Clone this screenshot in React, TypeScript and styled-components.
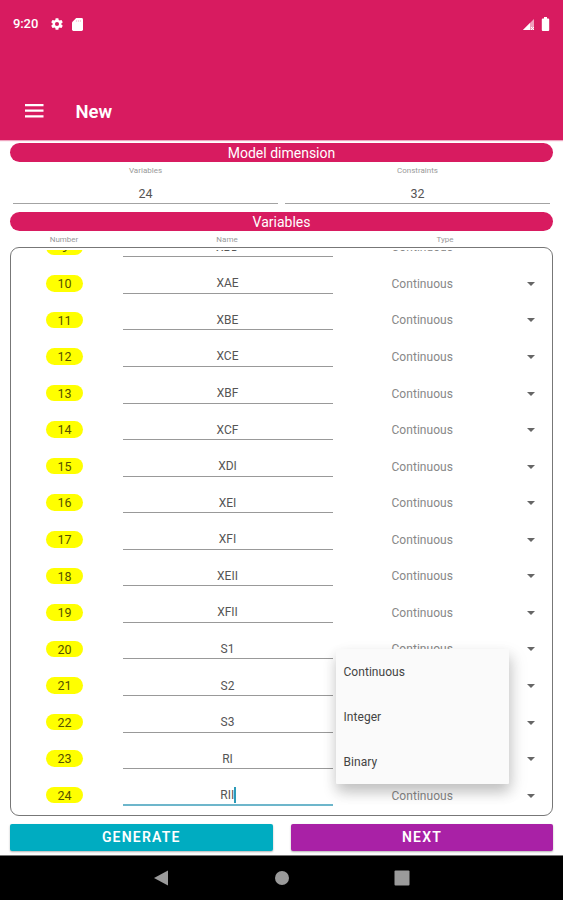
import React from 'react';
import styled, { createGlobalStyle } from 'styled-components';

const GlobalStyle = createGlobalStyle`
  * { box-sizing: border-box; }
  html, body { margin: 0; background: #fff; }
  body { font-family: Roboto, "Liberation Sans", sans-serif; color: #555; }
`;

const Screen = styled.div`
  position: relative;
  width: 563px;
  height: 900px;
  display: flex;
  flex-direction: column;
  overflow: hidden;
  background: #fff;
`;

const Header = styled.header`
  height: 140px;
  flex: none;
  background: #d81b60;
  color: #fff;
  box-shadow: 0 1px 1px rgba(216, 27, 96, 0.4);
`;

const StatusBar = styled.div`
  height: 48px;
  padding: 0 13px 0 13px;
  display: flex;
  align-items: center;
  justify-content: space-between;
`;

const StatusGroup = styled.div<{ $gap: number }>`
  display: flex;
  align-items: center;
  gap: ${(p) => p.$gap}px;
`;

const Clock = styled.span`
  font-size: 13px;
  line-height: 15px;
  margin-top: -1px;
  font-weight: 500;
  width: 28px;
  letter-spacing: -0.1px;
  white-space: nowrap;
`;

const Toolbar = styled.div`
  height: 64px;
  margin-top: 31px;
  padding-left: 25px;
  display: flex;
  align-items: center;
  gap: 31.5px;
`;

const Title = styled.h1`
  margin: 2px 0 0;
  font-size: 18.5px;
  line-height: 24px;
  font-weight: 600;
`;

const Main = styled.main`
  flex: 1;
  padding: 3px 10px 0;
  display: flex;
  flex-direction: column;
`;

const SectionBar = styled.h2`
  margin: 0;
  height: 19px;
  flex: none;
  border-radius: 10px;
  background: #d81b60;
  color: #fff;
  text-align: center;
  font-size: 14px;
  font-weight: 400;
  line-height: 20px;
`;

const Dimensions = styled.div`
  height: 50px;
  flex: none;
  padding: 0 3px;
  display: grid;
  grid-template-columns: 265px 265px;
  column-gap: 7px;
`;

const Dimension = styled.label`
  height: 42px;
  padding-top: 3px;
  display: flex;
  flex-direction: column;
  align-items: center;
  border-bottom: 1px solid #a3a3a3;
`;

const Caption = styled.span`
  font-size: 8px;
  line-height: 11px;
  color: #999;
  text-align: center;
`;

const DimensionValue = styled.span`
  margin-top: 10px;
  font-size: 12.5px;
  line-height: 16px;
  color: #555;
`;

const Columns = styled.div`
  height: 16px;
  flex: none;
  padding-top: 3px;
  display: grid;
  grid-template-columns: 108px 218px 218px;
`;

const Panel = styled.section`
  height: 569px;
  flex: none;
  padding: 2px 0;
  border: 1px solid #777;
  border-radius: 9px;
`;

const Viewport = styled.div`
  height: 563px;
  overflow: hidden;
`;

const List = styled.div`
  margin-top: -21.5px;
`;

const Row = styled.div`
  height: 36.57px;
  padding: 0 16px 0 35px;
  display: flex;
  align-items: center;
`;

const Badge = styled.span`
  width: 37px;
  height: 16.5px;
  border-radius: 9px;
  background: #ff0;
  text-align: center;
  font-size: 12.5px;
  line-height: 17px;
  color: #555200;
`;

const NameField = styled.div<{ $active: boolean }>`
  width: 210px;
  height: ${(p) => (p.$active ? 22 : 21)}px;
  margin: 0 0 0 39.5px;
  padding-top: ${(p) => (p.$active ? 2 : 1)}px;
  display: flex;
  align-items: center;
  justify-content: center;
  font-size: 12px;
  line-height: 18px;
  color: #555;
  border-bottom: ${(p) => (p.$active ? '2px solid #6db6cb' : '1px solid #999')};
`;

const Caret = styled.i`
  width: 1.5px;
  height: 16px;
  margin-right: -1px;
  background: #2b9ab8;
`;

const TypeSelect = styled.div`
  margin-left: 59px;
  padding-top: 1px;
  flex: 1;
  display: flex;
  align-items: center;
  justify-content: space-between;
  font-size: 12px;
  letter-spacing: 0.05px;
  color: #888;
`;

const Arrow = styled.i`
  width: 0;
  height: 0;
  margin-right: 1px;
  border-left: 4.5px solid transparent;
  border-right: 4.5px solid transparent;
  border-top: 4.5px solid #666;
`;

const Menu = styled.div`
  position: absolute;
  left: 336px;
  top: 649px;
  width: 173px;
  height: 135px;
  background: #fafafa;
  border-radius: 1px;
  box-shadow: 0 8px 14px rgba(0, 0, 0, 0.2), 5px 6px 18px rgba(0, 0, 0, 0.08);
`;

const MenuItem = styled.div`
  height: 45px;
  padding-left: 7.5px;
  display: flex;
  align-items: center;
  font-size: 12px;
  letter-spacing: 0.05px;
  color: #444;
`;

const Actions = styled.div`
  margin-top: 8px;
  display: grid;
  grid-template-columns: 262.5px 262px;
  justify-content: space-between;
`;

const Action = styled.button<{ $color: string }>`
  height: 26.5px;
  padding: 0;
  border: 0;
  border-radius: 2px;
  background: ${(p) => p.$color};
  box-shadow: 0 1px 2px rgba(0, 0, 0, 0.3);
  color: #fff;
  font: 600 14px/26px Roboto, "Liberation Sans", sans-serif;
  letter-spacing: 1.2px;
`;

const NavBar = styled.nav`
  height: 45px;
  flex: none;
  border-top: 1px solid #777;
  background: #000;
  display: flex;
  justify-content: center;
  align-items: center;
`;

const NavIcon = styled.svg`
  width: 120px;
  height: 20px;
  fill: #9a9a9a;
`;

const names = ['XBD', 'XAE', 'XBE', 'XCE', 'XBF', 'XCF', 'XDI', 'XEI', 'XFI', 'XEII', 'XFII', 'S1', 'S2', 'S3', 'RI', 'RII'];
const firstNumber = 9;

function StatusIcons() {
  return (
    <StatusGroup $gap={8.5}>
      <Clock>9:20</Clock>
      <svg width="14" height="14" viewBox="0 0 24 24" fill="#fff">
        <path fillRule="evenodd" d="M19.43 12.98c.04-.32.07-.64.07-.98s-.03-.66-.07-.98l2.11-1.65c.19-.15.24-.42.12-.64l-2-3.46c-.12-.22-.39-.3-.61-.22l-2.49 1c-.52-.4-1.08-.73-1.69-.98l-.38-2.65A.49.49 0 0 0 14 2h-4a.49.49 0 0 0-.49.42l-.38 2.65c-.61.25-1.17.59-1.69.98l-2.49-1a.5.5 0 0 0-.61.22l-2 3.46c-.13.22-.07.49.12.64l2.11 1.65c-.04.32-.07.65-.07.98s.03.66.07.98l-2.11 1.65c-.19.15-.24.42-.12.64l2 3.46c.12.22.39.3.61.22l2.49-1c.52.4 1.08.73 1.69.98l.38 2.65c.03.24.24.42.49.42h4c.25 0 .46-.18.49-.42l.38-2.65c.61-.25 1.17-.59 1.69-.98l2.49 1c.23.09.49 0 .61-.22l2-3.46a.5.5 0 0 0-.12-.64zM12 15.5a3.5 3.5 0 1 1 0-7 3.5 3.5 0 0 1 0 7z" />
      </svg>
      <svg width="11" height="13" viewBox="0 0 11 13" fill="#fff">
        <path d="M4.2 0H9.6Q11 0 11 1.4V11.6Q11 13 9.6 13H1.4Q0 13 0 11.6V4.2Z" />
        <path d="M4.4 2v2M6.4 2v2M8.4 2v2" stroke="#f3b5cb" strokeWidth=".7" />
      </svg>
    </StatusGroup>
  );
}

function VariableRow({ number, name, active }: { number: number; name: string; active: boolean }) {
  return (
    <Row>
      <Badge>{number}</Badge>
      <NameField $active={active}>
        {name}
        {active && <Caret />}
      </NameField>
      <TypeSelect>
        Continuous
        <Arrow />
      </TypeSelect>
    </Row>
  );
}

export default function App() {
  return (
    <Screen>
      <GlobalStyle />
      <Header>
        <StatusBar>
          <StatusIcons />
          <StatusGroup $gap={7}>
            <svg width="11" height="11" viewBox="0 0 11 11">
              <path d="M11 0V11H0Z" fill="#ef9fbd" />
              <path d="M7 4V11H0Z" fill="#fff" />
              <path d="M8 8l3 3M11 8l-3 3" stroke="#fff" />
            </svg>
            <svg width="9" height="14" viewBox="0 0 9 14" fill="#fff">
              <path d="M3 0H6V1.5H7.2Q8.2 1.5 8.2 2.5V13Q8.2 14 7.2 14H1.8Q.8 14 .8 13V2.5Q.8 1.5 1.8 1.5H3Z" />
            </svg>
          </StatusGroup>
        </StatusBar>
        <Toolbar>
          <svg width="19" height="14" viewBox="0 0 19 14" fill="#fff">
            <path d="M0 0h18.5v2.2H0zM0 5.6h18.5v2.2H0zM0 11.2h18.5v2.2H0z" />
          </svg>
          <Title>New</Title>
        </Toolbar>
      </Header>
      <Main>
        <SectionBar>Model dimension</SectionBar>
        <Dimensions>
          <Dimension>
            <Caption>Variables</Caption>
            <DimensionValue>24</DimensionValue>
          </Dimension>
          <Dimension>
            <Caption>Constraints</Caption>
            <DimensionValue>32</DimensionValue>
          </Dimension>
        </Dimensions>
        <SectionBar>Variables</SectionBar>
        <Columns>
          <Caption>Number</Caption>
          <Caption>Name</Caption>
          <Caption>Type</Caption>
        </Columns>
        <Panel>
          <Viewport>
            <List>
              {names.map((name, i) => (
                <VariableRow key={name} number={firstNumber + i} name={name} active={i === names.length - 1} />
              ))}
            </List>
          </Viewport>
        </Panel>
        <Actions>
          <Action $color="#00acc1">GENERATE</Action>
          <Action $color="#a921a6">NEXT</Action>
        </Actions>
      </Main>
      <NavBar>
        <NavIcon viewBox="-60 -10 120 20"><path d="M-8 0L6-7.5V7.5Z" /></NavIcon>
        <NavIcon viewBox="-60 -10 120 20"><circle r="7" /></NavIcon>
        <NavIcon viewBox="-60 -10 120 20"><rect x="-7.5" y="-7.5" width="15" height="15" rx="1" /></NavIcon>
      </NavBar>
      <Menu>
        <MenuItem>Continuous</MenuItem>
        <MenuItem>Integer</MenuItem>
        <MenuItem>Binary</MenuItem>
      </Menu>
    </Screen>
  );
}
